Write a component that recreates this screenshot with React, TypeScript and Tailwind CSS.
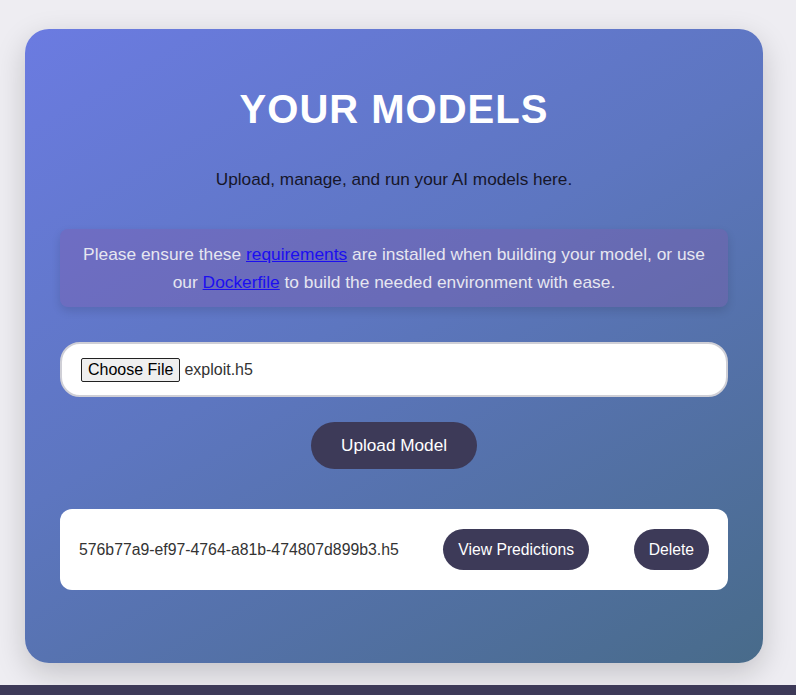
import React from "react";

export default function App() {
  return (
    <div className="min-h-[695px] w-full bg-[#eeedf2] flex flex-col" style={{ fontFamily: '"Liberation Sans", Arial, sans-serif' }}>
      <div className="pt-[29px] pl-[25px] pb-[22px]">
        <div className="w-[738px] h-[634px] rounded-[24px] bg-[linear-gradient(150deg,#6b7be1_0%,#5d76c0_45%,#486b8a_100%)] shadow-[0_10px_30px_rgba(0,0,0,0.18)] px-[35px] pt-[57px] flex flex-col">
          <h1 className="text-center text-white font-bold text-[40px] leading-[46px] tracking-[1px]">YOUR MODELS</h1>
          <p className="mt-[37px] text-center text-[17.2px] leading-[20px] text-[#16162a]">
            Upload, manage, and run your AI models here.
          </p>
          <div className="mt-[40px] rounded-[8px] bg-[rgba(130,90,170,0.35)] shadow-[0_4px_10px_rgba(0,0,0,0.12)] px-[20px] pt-[11px] pb-[11px] text-center text-[17.35px] leading-[28px] text-[#e6e6f0]">
            Please ensure these <a href="#" className="text-[#1b0ef0] underline">requirements</a> are installed when building your model, or use our <a href="#" className="text-[#1b0ef0] underline">Dockerfile</a> to build the needed environment with ease.
          </div>
          <div className="mt-[35px] h-[55px] rounded-[20px] border-2 border-[#cfcfd6] bg-white flex items-center pl-[19px]">
            <span className="h-[24px] px-[6px] border-[1.5px] border-[#222] rounded-[2px] bg-[#efefef] text-[16px] leading-[20px] text-black flex items-center">Choose File</span>
            <span className="ml-[4px] text-[16px] text-[#333]">exploit.h5</span>
          </div>
          <div className="mt-[25px] flex justify-center">
            <button className="h-[47px] px-[30px] rounded-full bg-[#3d3a58] text-white text-[17.2px]">Upload Model</button>
          </div>
          <div className="mt-[40px] h-[81px] rounded-[12px] bg-white px-[19px] flex items-center justify-between">
            <span className="text-[15.8px] text-[#333]">576b77a9-ef97-4764-a81b-474807d899b3.h5</span>
            <button className="h-[41px] px-[15px] rounded-full bg-[#3d3a58] text-white text-[15.7px]">View Predictions</button>
            <button className="h-[41px] px-[15px] rounded-full bg-[#3d3a58] text-white text-[15.7px]">Delete</button>
          </div>
        </div>
      </div>
      <div className="h-[40px] bg-[#3d3a58]"></div>
    </div>
  );
}
